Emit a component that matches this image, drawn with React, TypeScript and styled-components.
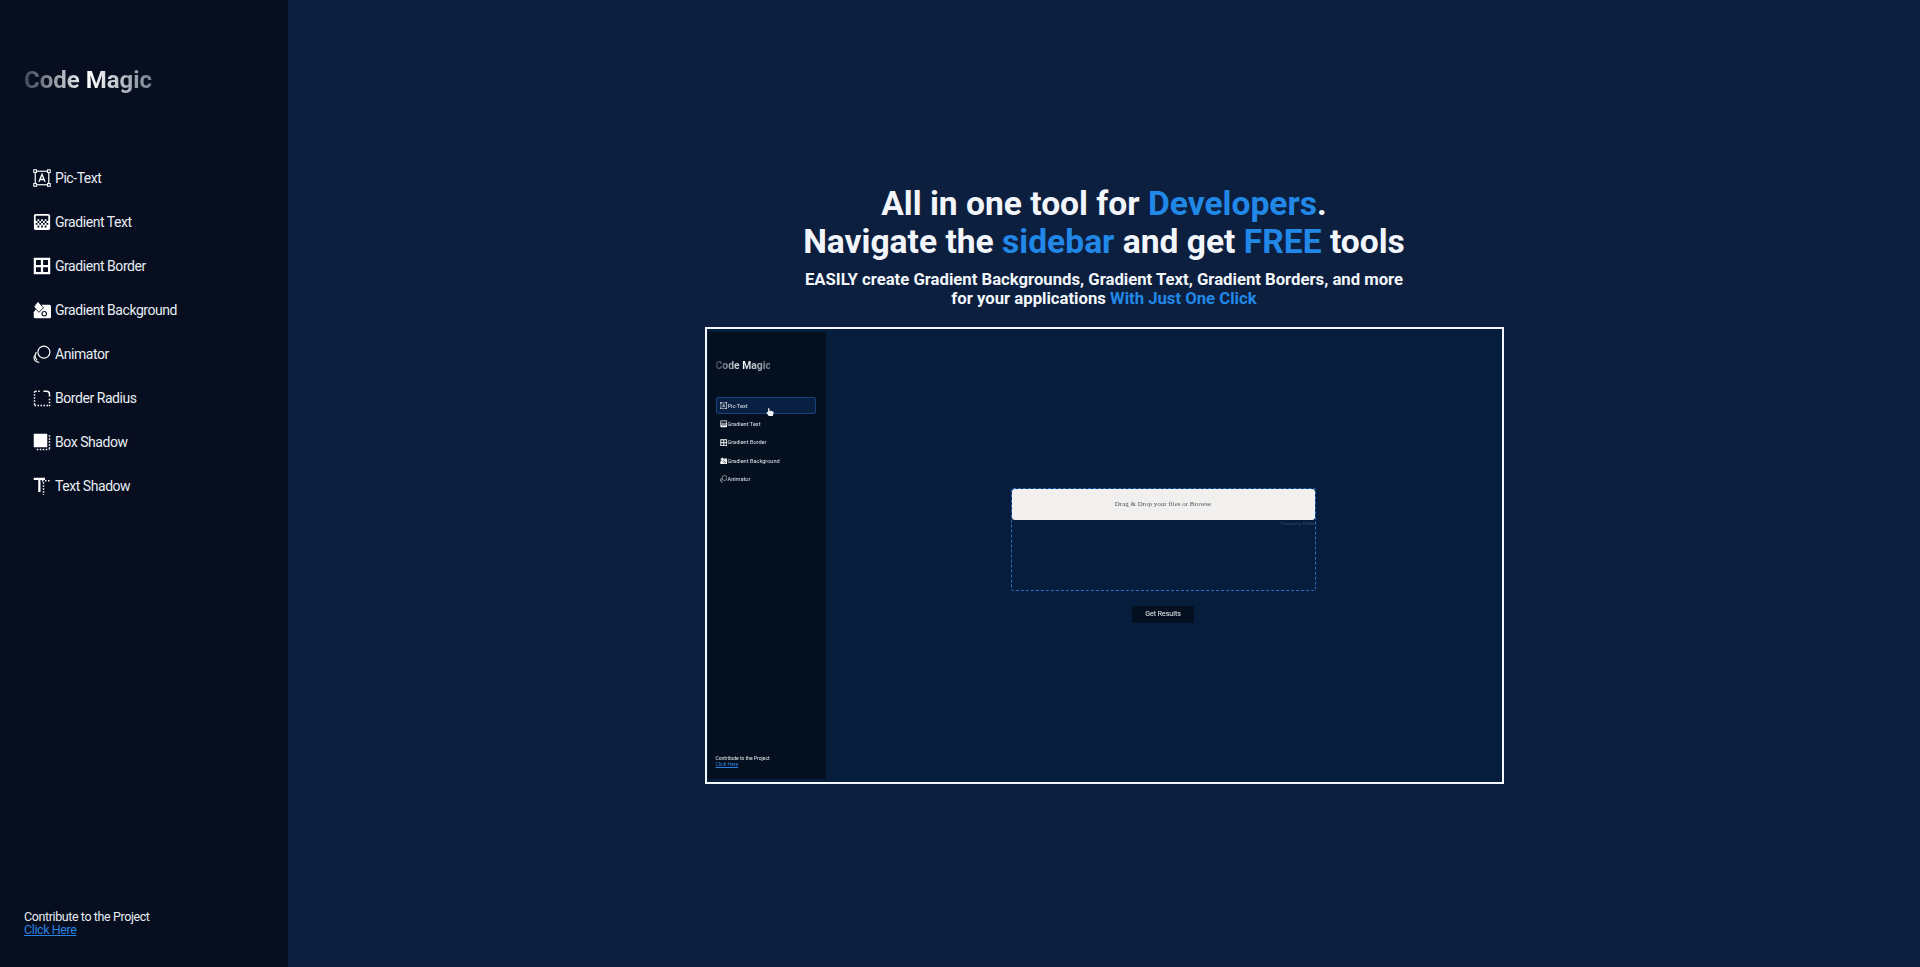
import React from "react";
import styled, { createGlobalStyle } from "styled-components";
import { MdGradient } from "react-icons/md";
import { FaHandPointer } from "react-icons/fa";

const FONT = `Roboto, "Liberation Sans", sans-serif`;

const GlobalStyle = createGlobalStyle`
  html, body { margin: 0; padding: 0; background: #0c1f3f; }
  body { font-family: ${FONT}; color: #fff; }
  * { box-sizing: border-box; }
`;

const PicTextIcon = () => (
  <svg viewBox="0 0 24 24" width="1em" height="1em" fill="none" stroke="currentColor">
    <rect x="3" y="3" width="18" height="18" strokeWidth="1.6" />
    <path d="M8 17 12 7l4 10M9.4 14h5.2" strokeWidth="1.8" />
    <g fill="#060e1f" strokeWidth="1.4">
      <rect x="1" y="1" width="3.6" height="3.6" />
      <rect x="19.4" y="1" width="3.6" height="3.6" />
      <rect x="1" y="19.4" width="3.6" height="3.6" />
      <rect x="19.4" y="19.4" width="3.6" height="3.6" />
    </g>
  </svg>
);

const BorderAllIcon = () => (
  <svg viewBox="0 0 24 24" width="1em" height="1em" fill="currentColor">
    <path
      fillRule="evenodd"
      d="M1 1h22v22H1zM4 4v6.5h6.5V4zM13.500 4v6.5H20V4zM4 13.500V20h6.500v-6.500zM13.500 13.500V20H20v-6.500z"
    />
  </svg>
);

const PaintIcon = () => (
  <svg viewBox="0 0 24 24" width="1em" height="1em" fill="currentColor">
    <path d="M8 5h14a2 2 0 0 1 2 2v14a2 2 0 0 1-2 2H3a2 2 0 0 1-2-2v-6z" />
    <path d="M7 1 1 8l7 7 6-6z" stroke="#060e1f" strokeWidth="1.2" />
    <circle cx="15" cy="17" r="3" fill="none" stroke="#060e1f" strokeWidth="1.4" />
    <path d="M7 1.5 3 6" stroke="currentColor" strokeWidth="1.2" />
  </svg>
);

const AnimatorIcon = () => (
  <svg viewBox="0 0 24 24" width="1em" height="1em" fill="none" stroke="currentColor" strokeWidth="1.5">
    <circle cx="14.500" cy="9.500" r="8" />
    <path d="M4.500 9.500a9 9 0 0 0 1 11" />
    <path d="M2 14a7 7 0 0 0 0.500 6.500 7 7 0 0 0 6 2.500" />
  </svg>
);

const RadiusIcon = () => (
  <svg viewBox="0 0 24 24" width="1em" height="1em" fill="none" stroke="currentColor" strokeWidth="2">
    <path d="M14 3h4a4 4 0 0 1 4 4v3" />
    <path d="M3 3h8M2 3v20M22 13v10M2 22h20" strokeDasharray="2 2" />
  </svg>
);

const ShadowIcon = () => (
  <svg viewBox="0 0 24 24" width="1em" height="1em" fill="none" stroke="currentColor">
    <rect x="1" y="1" width="18" height="18" fill="currentColor" stroke="none" />
    <path d="M22 3v20M5 22h17" strokeWidth="2" strokeDasharray="2 2" />
  </svg>
);

const TextShadowIcon = () => (
  <svg viewBox="0 0 24 24" width="1em" height="1em" fill="currentColor" stroke="none">
    <path d="M1 1h15v3h-6v16H7V4H1z" />
    <path d="M12 5h10M14 7v17" fill="none" stroke="currentColor" strokeWidth="2" strokeDasharray="2 2" />
  </svg>
);

const Page = styled.div`
  display: flex;
  width: 100%;
  height: 967px;
  overflow: hidden;
  background: #0c1f3f;
`;

const Sidebar = styled.aside`
  flex: 0 0 288px;
  display: flex;
  flex-direction: column;
  padding: 64px 24px 31px;
  background: #060e1f;
`;

const Logo = styled.h1`
  margin: 0;
  width: 130px;
  font-size: 24px;
  line-height: 32px;
  font-weight: 700;
  white-space: nowrap;
  background: linear-gradient(to right, #3c4657, #ffffff 50%, #6f7b8a);
  -webkit-background-clip: text;
  background-clip: text;
  color: transparent;
`;

const NavList = styled.nav`
  display: flex;
  flex-direction: column;
  gap: 14px;
  margin-top: 66.5px;
  padding-left: 9px;
`;

const NavItem = styled.a`
  display: flex;
  align-items: center;
  gap: 4px;
  height: 30px;
  font-size: 14px;
  letter-spacing: -0.45px;
  color: #e8edf3;
  white-space: nowrap;
`;

const NavIcon = styled.span`
  display: flex;
  font-size: 18px;
  color: #fff;
`;

const Footer = styled.footer`
  margin-top: auto;
  font-size: 12.5px;
  line-height: 13px;
  letter-spacing: -0.4px;
  color: #e8edf3;
`;

const FooterLink = styled.a`
  display: block;
  color: #2a83e0;
  text-decoration: underline;
`;

const Main = styled.main`
  flex: 1;
  display: flex;
  flex-direction: column;
  align-items: center;
  justify-content: center;
  padding-top: 1px;
`;

const Headline = styled.h2`
  margin: 0;
  font-size: 33.6px;
  line-height: 38px;
  font-weight: 700;
  text-align: center;
  color: #f2f6fb;
`;

const Accent = styled.span`
  color: #2188e8;
`;

const SubHeadline = styled.p`
  margin: 9px 0 0;
  font-size: 16.7px;
  line-height: 19px;
  font-weight: 700;
  text-align: center;
  color: #f2f6fb;
`;

const Preview = styled.div`
  display: flex;
  width: 799px;
  height: 457px;
  margin-top: 19px;
  padding: 3px 1px;
  border: 2px solid #f4f8fc;
  background: #061d3c;
`;

const MiniSidebar = styled.div`
  flex: 0 0 118px;
  display: flex;
  flex-direction: column;
  padding: 27px 10px 12px 8px;
  background: #04101f;
  filter: blur(0.3px);
`;

const MiniLogo = styled(Logo)`
  width: 54px;
  font-size: 10.4px;
  line-height: 13px;
`;

const MiniNav = styled.div`
  display: flex;
  flex-direction: column;
  gap: 1.4px;
  margin-top: 25.5px;
  position: relative;
`;

const MiniItem = styled.div<{ $active?: boolean }>`
  display: flex;
  align-items: center;
  gap: 0.5px;
  height: 17px;
  padding-left: 3px;
  font-size: 5.6px;
  color: #dde3ea;
  white-space: nowrap;
  border-radius: 2px;
  border: 1px solid ${(p) => (p.$active ? "#17427c" : "transparent")};
  background: ${(p) => (p.$active ? "#0a2042" : "transparent")};
`;

const MiniIcon = styled.span`
  display: flex;
  font-size: 7.5px;
  color: #fff;
`;

const Pointer = styled.span`
  position: absolute;
  left: 50px;
  top: 11px;
  font-size: 8px;
  color: #fff;
  display: flex;
`;

const MiniFooter = styled.div`
  margin-top: auto;
  font-size: 5px;
  line-height: 6px;
  color: #e8edf3;
`;

const MiniLink = styled.a`
  display: block;
  color: #2a83e0;
  text-decoration: underline;
`;

const MiniMain = styled.div`
  flex: 1;
  display: flex;
  flex-direction: column;
  align-items: center;
  justify-content: center;
  filter: blur(0.25px);
`;

const DropArea = styled.div`
  width: 305px;
  height: 103px;
  border: 1px dashed #2b6cc4;
  border-radius: 2px;
  display: flex;
  flex-direction: column;
`;

const DropPanel = styled.div`
  height: 31px;
  display: flex;
  align-items: center;
  justify-content: center;
  background: #f1f0ef;
  border-radius: 3px;
  font-family: "Liberation Serif", serif;
  font-size: 7px;
  color: #555;
`;

const Powered = styled.div`
  align-self: flex-end;
  margin-top: 1px;
  font-size: 4px;
  color: #3c4f72;
`;

const ResultButton = styled.button`
  margin-top: 15px;
  width: 62px;
  height: 17px;
  border: 0;
  border-radius: 2px;
  padding: 0;
  background: #04101f;
  color: #f0f3f7;
  font-family: ${FONT};
  font-size: 7px;
`;

const items = [
  { label: "Pic-Text", icon: <PicTextIcon /> },
  { label: "Gradient Text", icon: <MdGradient viewBox="2 2 20 20" /> },
  { label: "Gradient Border", icon: <BorderAllIcon /> },
  { label: "Gradient Background", icon: <PaintIcon /> },
  { label: "Animator", icon: <AnimatorIcon /> },
  { label: "Border Radius", icon: <RadiusIcon /> },
  { label: "Box Shadow", icon: <ShadowIcon /> },
  { label: "Text Shadow", icon: <TextShadowIcon /> },
];

export default function App() {
  return (
    <Page>
      <GlobalStyle />
      <Sidebar>
        <Logo>Code Magic</Logo>
        <NavList>
          {items.map((item) => (
            <NavItem key={item.label}>
              <NavIcon>{item.icon}</NavIcon>
              {item.label}
            </NavItem>
          ))}
        </NavList>
        <Footer>
          Contribute to the Project
          <FooterLink>Click Here</FooterLink>
        </Footer>
      </Sidebar>
      <Main>
        <Headline>
          All in one tool for <Accent>Developers</Accent>.
          <br />
          Navigate the <Accent>sidebar</Accent> and get <Accent>FREE</Accent> tools
        </Headline>
        <SubHeadline>
          EASILY create Gradient Backgrounds, Gradient Text, Gradient Borders, and more
          <br />
          for your applications <Accent>With Just One Click</Accent>
        </SubHeadline>
        <Preview>
          <MiniSidebar>
            <MiniLogo>Code Magic</MiniLogo>
            <MiniNav>
              {items.slice(0, 5).map((item, i) => (
                <MiniItem key={item.label} $active={i === 0}>
                  <MiniIcon>{item.icon}</MiniIcon>
                  {item.label}
                </MiniItem>
              ))}
              <Pointer>
                <FaHandPointer />
              </Pointer>
            </MiniNav>
            <MiniFooter>
              Contribute to the Project
              <MiniLink>Click Here</MiniLink>
            </MiniFooter>
          </MiniSidebar>
          <MiniMain>
            <DropArea>
              <DropPanel>Drag &amp; Drop your files or Browse</DropPanel>
              <Powered>Powered by PQINA</Powered>
            </DropArea>
            <ResultButton>Get Results</ResultButton>
          </MiniMain>
        </Preview>
      </Main>
    </Page>
  );
}
